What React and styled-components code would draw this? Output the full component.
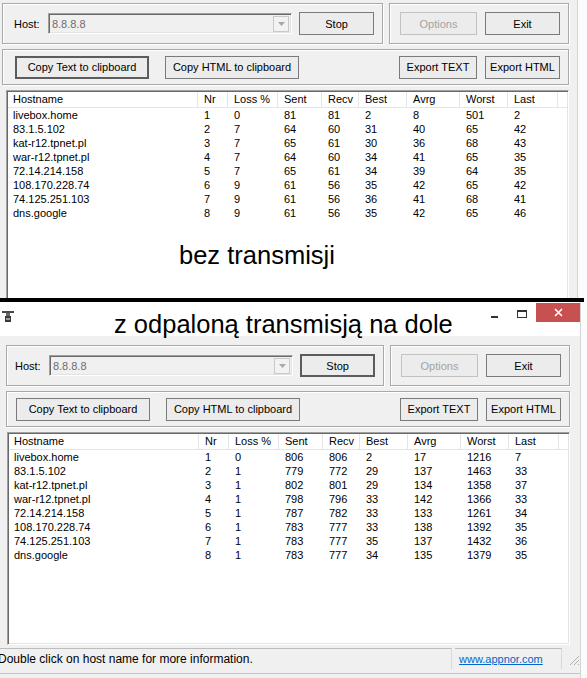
import React from "react";
import styled, { createGlobalStyle } from "styled-components";

const GlobalStyle = createGlobalStyle`
    html, body {
        margin: 0;
        padding: 0;
        background: #fbfbfb;
    }
    body {
        font-family: "Liberation Sans", Arial, sans-serif;
        font-size: 11px;
        color: #000;
    }
`;

const COLUMNS = ["Hostname", "Nr", "Loss %", "Sent", "Recv", "Best", "Avrg", "Worst", "Last"];
const WIDTHS = [190, 30, 50, 44, 37, 48, 53, 48, 50];

const idleRows = [
    ["livebox.home", 1, 0, 81, 81, 2, 8, 501, 2],
    ["83.1.5.102", 2, 7, 64, 60, 31, 40, 65, 42],
    ["kat-r12.tpnet.pl", 3, 7, 65, 61, 30, 36, 68, 43],
    ["war-r12.tpnet.pl", 4, 7, 64, 60, 34, 41, 65, 35],
    ["72.14.214.158", 5, 7, 65, 61, 34, 39, 64, 35],
    ["108.170.228.74", 6, 9, 61, 56, 35, 42, 65, 42],
    ["74.125.251.103", 7, 9, 61, 56, 36, 41, 68, 41],
    ["dns.google", 8, 9, 61, 56, 35, 42, 65, 46],
];

const busyRows = [
    ["livebox.home", 1, 0, 806, 806, 2, 17, 1216, 7],
    ["83.1.5.102", 2, 1, 779, 772, 29, 137, 1463, 33],
    ["kat-r12.tpnet.pl", 3, 1, 802, 801, 29, 134, 1358, 37],
    ["war-r12.tpnet.pl", 4, 1, 798, 796, 33, 142, 1366, 33],
    ["72.14.214.158", 5, 1, 787, 782, 33, 133, 1261, 34],
    ["108.170.228.74", 6, 1, 783, 777, 33, 138, 1392, 35],
    ["74.125.251.103", 7, 1, 783, 777, 35, 137, 1432, 36],
    ["dns.google", 8, 1, 783, 777, 34, 135, 1379, 35],
];

const Page = styled.div`
    width: 587px;
    height: 678px;
    overflow: hidden;
    display: flex;
    flex-direction: column;
`;

const Shot = styled.div`
    box-sizing: border-box;
    flex-shrink: 0;
    width: ${(p) => p.$w}px;
    height: ${(p) => p.$h}px;
    overflow: hidden;
    background: #f0f0f0;
    border-right: 1px solid #d4d4d4;
    display: flex;
    flex-direction: column;
`;

const Divider = styled.div`
    flex-shrink: 0;
    height: 4px;
    width: 584px;
    background: #000;
`;

const TitleBar = styled.div`
    height: 34px;
    flex-shrink: 0;
    background: #fff;
    display: flex;
    align-items: flex-start;
`;

const AppIcon = styled.svg`
    width: 12px;
    height: 13px;
    margin: 8px 0 0 2px;
`;

const Caption = styled.div`
    font-family: "Liberation Sans", Arial, sans-serif;
    font-size: 25.5px;
    line-height: 30px;
    margin: 7px 0 0 100px;
    white-space: nowrap;
`;

const CaptionButtons = styled.div`
    margin-left: auto;
    display: flex;
    align-items: flex-start;
`;

const CaptionButton = styled.div`
    box-sizing: border-box;
    width: ${(p) => p.$w}px;
    height: 19px;
    margin-top: 1px;
    display: flex;
    align-items: flex-start;
    justify-content: ${(p) => (p.$pl ? "flex-start" : "center")};
    padding: ${(p) => p.$pt || 0}px 0 0 ${(p) => p.$pl || 0}px;
    background: ${(p) => p.$bg || "transparent"};
`;

const Content = styled.div`
    display: flex;
    flex-direction: column;
    padding: ${(p) => p.$pad};
`;

const Row = styled.div`
    display: flex;
    gap: ${(p) => p.$gap}px;
    margin-bottom: 5px;
`;

const GroupBox = styled.div`
    box-sizing: border-box;
    width: ${(p) => p.$w}px;
    height: ${(p) => p.$h}px;
    border: 1px solid #a9a9a9;
    box-shadow: inset 1px 1px 0 #fff, 1px 1px 0 #fff;
    display: flex;
    align-items: center;
    gap: ${(p) => p.$gap || 0}px;
    padding: 0 ${(p) => p.$right || 0}px 0 ${(p) => p.$left || 0}px;
`;

const Spacer = styled.div`
    flex: 1;
`;

const Label = styled.span`
    width: 34px;
    margin-top: 1px;
`;

const Combo = styled.div`
    box-sizing: border-box;
    width: 245px;
    height: 21px;
    margin-right: 7px;
    border: 1px solid;
    border-color: #a0a0a0 #fff #fff #a0a0a0;
    box-shadow: inset 1px 1px 0 #696969, inset -1px -1px 0 #e3e3e3;
    display: flex;
    align-items: center;
    padding: 0 2px 0 3px;
    color: #6d6d6d;
`;

const ComboArrow = styled.div`
    box-sizing: border-box;
    margin-left: auto;
    width: 16px;
    height: 16px;
    border: 1px solid #c9c9c9;
    background: #f2f2f2;
    display: flex;
    align-items: center;
    justify-content: center;
`;

const Button = styled.button`
    box-sizing: border-box;
    width: ${(p) => p.$w}px;
    height: 23px;
    padding: 0;
    margin-left: ${(p) => p.$ml || 0}px;
    font-family: "Liberation Sans", Arial, sans-serif;
    font-size: 11px;
    color: ${(p) => (p.disabled ? "#a3a3a3" : "#000")};
    background: #ececec;
    border: ${(p) => (p.$primary ? "2px solid #5c5c5c" : `1px solid ${p.disabled ? "#c2c2c2" : "#7a7a7a"}`)};
    border-radius: 0;
`;

const List = styled.div`
    box-sizing: border-box;
    flex-shrink: 0;
    width: ${(p) => p.$w}px;
    height: ${(p) => p.$h}px;
    margin: 5px 0 0 ${(p) => p.$left}px;
    background: #fff;
    border: 1px solid;
    border-color: #a0a0a0 #fff #fff #a0a0a0;
    box-shadow: inset 1px 1px 0 #696969, inset -1px -1px 0 #e3e3e3;
    padding: 1px 0 0 1px;
    overflow: hidden;
`;

const Grid = styled.div`
    display: grid;
    grid-template-columns: ${WIDTHS.map((w) => `${w}px`).join(" ")} 1fr;
`;

const HeadCell = styled.div`
    height: 15px;
    line-height: 15px;
    padding-left: ${(p) => (p.$first ? 5 : 6)}px;
    border-right: ${(p) => (p.$filler ? "none" : "1px solid #e5e5e5")};
    border-bottom: 1px solid #e5e5e5;
    white-space: nowrap;
    overflow: hidden;
`;

const Cell = styled.div`
    height: 14px;
    line-height: 14px;
    padding-left: ${(p) => (p.$first ? 5 : 6)}px;
    white-space: nowrap;
`;

const Note = styled.div`
    font-family: "Liberation Sans", Arial, sans-serif;
    font-size: 25.5px;
    line-height: 30px;
    margin: 20px 0 0 171px;
    white-space: nowrap;
`;

const StatusBar = styled.div`
    display: flex;
    align-items: stretch;
    height: 21px;
    margin: 3px 0 0 -6px;
    font-size: 12px;
`;

const StatusPane = styled.div`
    box-sizing: border-box;
    width: ${(p) => p.$w}px;
    margin-right: 3px;
    border-top: 1px solid #bdbdbd;
    border-right: 1px solid #d9d9d9;
    display: flex;
    align-items: center;
    padding-left: ${(p) => p.$pad}px;
    white-space: nowrap;
`;

const StatusText = styled.span`
    margin-left: -2px;
`;

const Link = styled.a`
    color: #0066cc;
    text-decoration: underline;
    font-size: 11px;
`;

const Grip = styled.svg`
    width: 12px;
    height: 12px;
    align-self: flex-end;
    margin: 0 0 3px 3px;
`;

const BottomLine = styled.div`
    height: 1px;
    margin: 4px 0 0 -6px;
    background: #c4c4c4;
`;

const ListView = ({ rows, w, h, left, children }) => (
    <List $w={w} $h={h} $left={left}>
        <Grid>
            {COLUMNS.map((c, i) => (
                <HeadCell key={c} $first={i === 0}>
                    {c}
                </HeadCell>
            ))}
            <HeadCell $filler />
            {rows.map((r) =>
                r
                    .map((v, i) => (
                        <Cell key={`${r[0]}-${i}`} $first={i === 0}>
                            {v}
                        </Cell>
                    ))
                    .concat(<Cell key={`${r[0]}-f`} />)
            )}
        </Grid>
        {children}
    </List>
);

const Controls = ({ hostW, hostLeft, rowW, rowLeft, primary }) => (
    <>
        <Row $gap={6}>
            <GroupBox $w={hostW} $h={41} $left={hostLeft} $right={8}>
                <Label>Host:</Label>
                <Combo>
                    8.8.8.8
                    <ComboArrow>
                        <svg width="7" height="4" viewBox="0 0 7 4">
                            <path d="M0 0h7L3.5 4z" fill="#a8a8a8" />
                        </svg>
                    </ComboArrow>
                </Combo>
                <Button $w={75} $primary={primary === "stop"}>
                    Stop
                </Button>
            </GroupBox>
            <GroupBox $w={180} $h={41} $left={10} $gap={8}>
                <Button $w={77} disabled>
                    Options
                </Button>
                <Button $w={75}>Exit</Button>
            </GroupBox>
        </Row>
        <GroupBox $w={rowW} $h={36} $left={rowLeft} $right={8}>
            <Button $w={134} $primary={primary === "copy"}>
                Copy Text to clipboard
            </Button>
            <Button $w={134} $ml={16}>
                Copy HTML to clipboard
            </Button>
            <Spacer />
            <Button $w={78}>Export TEXT</Button>
            <Button $w={75} $ml={8}>
                Export HTML
            </Button>
        </GroupBox>
    </>
);

export default function App() {
    return (
        <>
            <GlobalStyle />
            <Page>
                <Shot $w={578} $h={298}>
                    <Content $pad="3px 0 0 2px">
                        <Controls hostW={381} hostLeft={11} rowW={567} rowLeft={12} primary="copy" />
                        <ListView rows={idleRows} w={563} h={260} left={4}>
                            <Note>bez transmisji</Note>
                        </ListView>
                    </Content>
                </Shot>
                <Divider />
                <Shot $w={581} $h={376}>
                    <TitleBar>
                        <AppIcon viewBox="0 0 12 13">
                            <rect x="0" y="1" width="12" height="2" fill="#4a4a4a" />
                            <rect x="4" y="3" width="4" height="3" fill="#6a6a6a" />
                            <rect x="3" y="6" width="6" height="6" fill="#3a3a3a" />
                            <rect x="4" y="8" width="4" height="2" fill="#9a9a9a" />
                        </AppIcon>
                        <Caption>z odpaloną transmisją na dole</Caption>
                        <CaptionButtons>
                            <CaptionButton $w={26} $pl={7} $pt={13}>
                                <svg width="7" height="2" viewBox="0 0 7 2">
                                    <rect width="7" height="2" fill="#333" />
                                </svg>
                            </CaptionButton>
                            <CaptionButton $w={26} $pl={7} $pt={7}>
                                <svg width="10" height="8" viewBox="0 0 10 8">
                                    <rect x="0.5" y="0.5" width="9" height="7" fill="none" stroke="#333" />
                                    <rect x="0" y="0" width="10" height="2" fill="#333" />
                                </svg>
                            </CaptionButton>
                            <CaptionButton $w={44} $bg="#c75050" $pt={5}>
                                <svg width="9" height="9" viewBox="0 0 9 9">
                                    <path d="M1 1l7 7M8 1L1 8" stroke="#fff" strokeWidth="1.6" />
                                </svg>
                            </CaptionButton>
                        </CaptionButtons>
                    </TitleBar>
                    <Content $pad="9px 0 0 6px">
                        <Controls hostW={378} hostLeft={8} rowW={564} rowLeft={9} primary="stop" />
                        <ListView rows={busyRows} w={563} h={213} left={1} />
                        <StatusBar>
                            <StatusPane $w={452} $pad={0}>
                                <StatusText>Double click on host name for more information.</StatusText>
                            </StatusPane>
                            <StatusPane $w={107} $pad={4}>
                                <Link href="#">www.appnor.com</Link>
                            </StatusPane>
                            <Grip viewBox="0 0 12 12">
                                <path d="M11 2L2 11M11 6L6 11M11 10L10 11" stroke="#b0b0b0" strokeWidth="1" />
                            </Grip>
                        </StatusBar>
                        <BottomLine />
                    </Content>
                </Shot>
            </Page>
        </>
    );
}
